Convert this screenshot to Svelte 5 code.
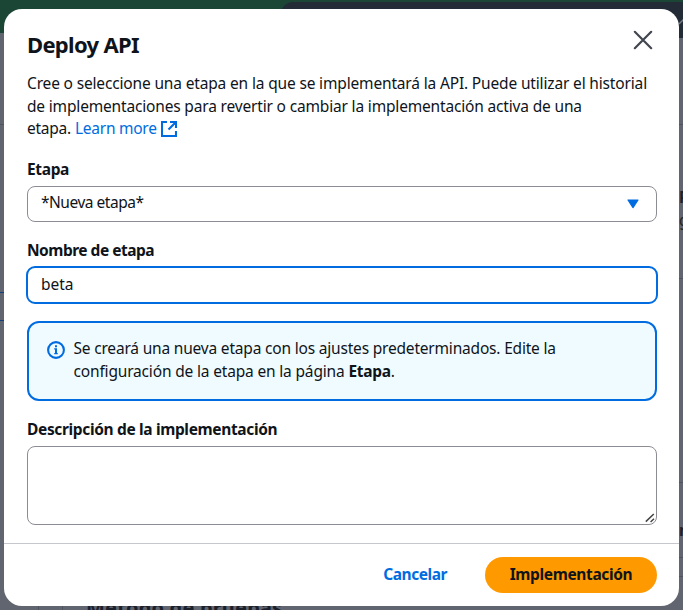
<script>
  const stage = '*Nueva etapa*';
  let name = $state('beta');
</script>

<div class="screen">
  <div class="page">
    <div class="topbar"></div>
    <div class="tab"></div>
    <svg class="tabmark" width="6" height="8" viewBox="0 0 6 8"><path d="M0 7 6 1" stroke="#777e87" stroke-width="1.5" /></svg>
    {#each [124, 278, 482, 557, 576] as y}
      <div class="rule right" style="top: {y}px"></div>
    {/each}
    <div class="rule left" style="top: 124px"></div>
    <div class="rule left blue" style="top: 292px"></div>
    <div class="rule left blue" style="top: 320px"></div>
    <span class="peek" style="top: 186px; font-weight: 700">R</span>
    <span class="peek link" style="top: 209px">g</span>
    <span class="peek" style="top: 519px; font-weight: 700">n</span>
    <div class="vline" style="left: 38px"></div>
    <div class="vline" style="left: 62px"></div>
    <span class="under">Método de pruebas</span>
  </div>

  <div class="modal" role="dialog" aria-label="Deploy API">
    <header>
      <h1>Deploy API</h1>
      <button class="close" aria-label="Cerrar">
        <svg width="20" height="20" viewBox="0 0 20 20"><path d="M1.8 1.8 18.2 18.2M18.2 1.8 1.8 18.2" fill="none" stroke="#424650" stroke-width="2.2" stroke-linecap="round" /></svg>
      </button>
    </header>

    <div class="intro">
      <div class="l1">Cree o seleccione una etapa en la que se implementará la API. Puede utilizar el historial</div>
      <div class="l2">de implementaciones para revertir o cambiar la implementación activa de una</div>
      <div class="l3">
        etapa. <span class="link-text">Learn more</span>
        <svg width="16" height="16" viewBox="0 0 16 16"><path d="M6 1H1v14h14v-5M9 1h6v6M14.5 1.5 7.5 8.5" fill="none" stroke="#006ce0" stroke-width="2.1" /></svg>
      </div>
    </div>

    <div class="label stage-label">Etapa</div>
    <div class="select">
      <span class="stage">{stage}</span>
      <svg width="12" height="10" viewBox="0 0 12 10"><path d="M1 1h10L6 8.6z" fill="#006ce0" stroke="#006ce0" stroke-width="1.2" stroke-linejoin="round" /></svg>
    </div>

    <div class="label name-label">Nombre de etapa</div>
    <input class="name" aria-label="Nombre de etapa" bind:value={name} />

    <div class="alert">
      <svg width="18" height="18" viewBox="0 0 18 18"><circle cx="9" cy="9" r="7.9" fill="none" stroke="#006ce0" stroke-width="2.1" /><path d="M8 4.2h2v2H8zM7.2 7.2H10v5.6H8V8.6h-.8zM7.2 12h3.6v1.2H7.2z" fill="#006ce0" /></svg>
      <div>
        <div class="a1">Se creará una nueva etapa con los ajustes predeterminados. Edite la</div>
        <div class="a2">configuración de la etapa en la página <b>Etapa</b>.</div>
      </div>
    </div>

    <div class="label desc-label">Descripción de la implementación</div>
    <div class="area">
      <svg width="10" height="10" viewBox="0 0 10 10"><path d="M.8 8.6 8.8 1M5.6 9 9 5.8" stroke="#444" stroke-width="1.5" /></svg>
    </div>

    <footer>
      <button class="cancel">Cancelar</button>
      <button class="deploy">Implementación</button>
    </footer>
  </div>
</div>

<style>
  :global(body) { margin: 0; overflow: hidden; }
  .screen, .screen * { box-sizing: border-box; }
  .screen {
    position: relative;
    width: 683px;
    height: 610px;
    overflow: hidden;
    padding: 9px 4px 4px;
    font-family: "Noto Sans", "Open Sans", sans-serif;
    font-size: 15.5px;
    line-height: 22.5px;
    color: #0f141a;
    white-space: nowrap;
  }
  .page { position: absolute; inset: 0; background: #61656f; }
  .topbar { height: 33px; background: #1b4636; }
  .tab { position: absolute; left: 281px; right: 0; top: 2px; height: 36px; background: #232b37; border-radius: 12px 0 0 0; }
  .tabmark { position: absolute; left: 679px; top: 17px; }
  .rule { position: absolute; height: 1px; background: #50545e; }
  .right { left: 679px; width: 4px; }
  .left { left: 0; width: 4px; }
  .blue { background: #123f79; }
  .peek { position: absolute; left: 679px; color: #1c222d; }
  .peek.link { text-decoration: underline; }
  .vline { position: absolute; top: 600px; height: 10px; width: 1px; background: #50545e; }
  .under { position: absolute; left: 86px; top: 597px; font-size: 20px; font-weight: 700; letter-spacing: 0.18px; color: #1b202b; }
  .modal {
    position: relative;
    height: 597px;
    background: #fff;
    border-radius: 18px;
    padding: 21px 22px 0 23px;
    display: flex;
    flex-direction: column;
  }
  header { display: flex; justify-content: space-between; height: 42px; flex: none; }
  h1 { margin: 0; font-size: 22px; line-height: 28px; letter-spacing: -0.7px; }
  button { border: 0; background: none; padding: 0; font: inherit; }
  .close { width: 20px; height: 20px; margin: 0 4px 0 0; }
  .close svg { display: block; }
  .intro { height: 68px; flex: none; }
  .l1 { letter-spacing: -0.16px; }
  .l2 { letter-spacing: -0.17px; }
  .l3 { display: flex; align-items: center; gap: 4px; letter-spacing: -0.25px; }
  .l3 svg { margin-top: 1px; }
  .link-text { color: #006ce0; }
  .label { font-weight: 700; letter-spacing: -0.35px; flex: none; }
  .stage-label { margin-top: 18px; height: 28px; }
  .name-label { margin-top: 17px; height: 27px; letter-spacing: -0.5px; }
  .desc-label { margin-top: 17px; height: 28px; }
  .select {
    height: 36px;
    flex: none;
    border: 1px solid #8c8c94;
    border-radius: 8px;
    padding: 0 17px 2px 13px;
    display: flex;
    justify-content: space-between;
    align-items: center;
  }
  .stage { letter-spacing: -0.48px; margin-top: -1px; }
  .select svg { margin-top: 1px; }
  .name {
    height: 38px;
    flex: none;
    margin: 0 -1px;
    border: 2px solid #006ce0;
    border-radius: 9px;
    padding: 0 13px 2px;
    font: inherit;
    color: inherit;
    background: #fff;
    outline: none;
  }
  .alert {
    margin-top: 17px;
    height: 80px;
    flex: none;
    border: 2px solid #006ce0;
    border-radius: 12px;
    background: #f0fbff;
    padding: 14px 18px;
    display: flex;
    gap: 8.5px;
  }
  .alert svg { margin-top: 4px; }
  .a1 { letter-spacing: -0.19px; }
  .a2 { letter-spacing: -0.17px; }
  .a2 b { letter-spacing: -0.3px; }
  .area {
    height: 79px;
    flex: none;
    border: 1px solid #8c8c94;
    border-radius: 8px;
    display: flex;
    justify-content: flex-end;
    align-items: flex-end;
    padding: 1px;
  }
  footer {
    margin: 18px -22px 0 -23px;
    border-top: 1px solid #c6c6cd;
    padding: 13px 22px 0;
    display: flex;
    justify-content: flex-end;
    font-weight: 700;
  }
  .cancel { height: 36px; padding-bottom: 2px; color: #006ce0; margin-right: 38px; letter-spacing: -0.45px; }
  .deploy { width: 172px; height: 36px; padding-bottom: 2px; border-radius: 18px; background: #ff9900; color: #0f141a; letter-spacing: -0.36px; }
</style>
